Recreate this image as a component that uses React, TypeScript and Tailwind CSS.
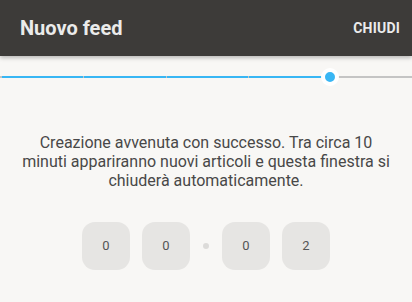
const digits = ['0', '0', '0', '2'];

function Digit({ value }: { value: string }) {
  return (
    <div className="flex h-12 w-12 items-center justify-center rounded-[13px] bg-[#e6e5e3] text-[13px] text-[#555]">
      {value}
    </div>
  );
}

export default function App() {
  return (
    <div className="h-[302px] w-[412px] overflow-hidden bg-[#f8f7f5] font-['Roboto',sans-serif]">
      <header className="relative z-10 flex h-14 items-center justify-between bg-[#3d3b39] pl-5 pr-3 shadow-[0_2px_4px_rgba(0,0,0,0.25)]">
        <h1 className="text-[20px] font-bold text-[#ebebeb]">Nuovo feed</h1>
        <button className="text-[14px] font-bold tracking-[0.2px] text-[#ebebeb]">CHIUDI</button>
      </header>

      <div className="relative mt-5 h-[2px] bg-[#c4c4c4]">
        <div className="flex h-[2px] w-[330px] gap-px pl-[2px]">
          <div className="h-full flex-1 bg-[#38b6f4]" />
          <div className="h-full flex-1 bg-[#38b6f4]" />
          <div className="h-full flex-1 bg-[#38b6f4]" />
          <div className="h-full flex-1 bg-[#38b6f4]" />
        </div>
        <div className="absolute left-[321px] top-[-8px] h-[18px] w-[18px] rounded-full border-4 border-white bg-[#38b6f4]" />
      </div>

      <p className="mt-[55px] px-5 text-center text-[16px] leading-[19px] text-[#484848]">
        Creazione avvenuta con successo. Tra circa 10 minuti appariranno nuovi articoli e questa finestra si chiuderà automaticamente.
      </p>

      <div className="mt-8 flex items-center justify-center">
        <div className="flex gap-3">
          <Digit value={digits[0]} />
          <Digit value={digits[1]} />
        </div>
        <div className="mx-[13px] h-[6px] w-[6px] rounded-full bg-[#dcdbd9]" />
        <div className="flex gap-3">
          <Digit value={digits[2]} />
          <Digit value={digits[3]} />
        </div>
      </div>
    </div>
  );
}
